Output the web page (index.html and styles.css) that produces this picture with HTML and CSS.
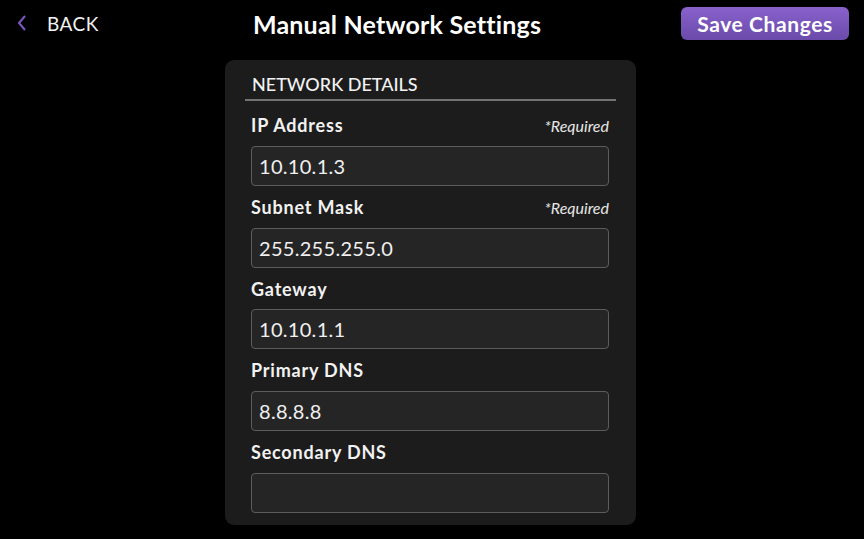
FILE: index.html
```html
<!DOCTYPE html>
<html lang="en">
<head>
    <meta charset="UTF-8">
    <meta name="viewport" content="width=device-width, initial-scale=1.0">
    <title>Manual Network Settings</title>
    <link rel="stylesheet" href="styles.css">
</head>
<body>

<!-- Top bar -->
<div class="topbar">
    <a class="back" href="#">
        <svg class="chev" width="10" height="16" viewBox="0 0 10 16">
            <path d="M8 1 L2 8 L8 15" fill="none" stroke="#7e57c2" stroke-width="2"/>
        </svg>
        <span>BACK</span>
    </a>
    <h1>Manual Network Settings</h1>
    <button class="save">Save Changes</button>
</div>

<div class="card">
    <div class="section-title">NETWORK DETAILS</div>

    <div class="field">
        <div class="label-row"><label>IP Address</label><span class="req">*Required</span></div>
        <input class="input" type="text" value="10.10.1.3">
    </div>
    <div class="field">
        <div class="label-row"><label>Subnet Mask</label><span class="req">*Required</span></div>
        <input class="input" type="text" value="255.255.255.0">
    </div>
    <div class="field">
        <div class="label-row"><label>Gateway</label></div>
        <input class="input" type="text" value="10.10.1.1">
    </div>
    <div class="field">
        <div class="label-row"><label>Primary DNS</label></div>
        <input class="input" type="text" value="8.8.8.8">
    </div>
    <div class="field">
        <div class="label-row"><label>Secondary DNS</label></div>
        <input class="input" type="text" value="">
    </div>
</div>

</body>
</html>
```

FILE: styles.css
```css
body {
    margin: 0;
    background: #000;
    color: #f2f2f2;
    font-family: 'Lato', 'Open Sans', sans-serif;
    overflow: hidden;
}

/* Top bar */
.topbar {
    height: 46px;
    display: flex;
    align-items: center;
    padding: 0 15px 0 17px;
}

.back {
    display: flex;
    align-items: center;
    gap: 20px;
    color: #f2f2f2;
    text-decoration: none;
    font-size: 19px;
    letter-spacing: 0.5px;
}

.chev {
    display: block;
}

h1 {
    margin: 2px 0 0 154px;
    font-size: 25px;
    font-weight: 700;
    letter-spacing: 0.2px;
    color: #fff;
}

.save {
    margin-left: auto;
    width: 168px;
    height: 33px;
    border: none;
    border-radius: 6px;
    background: linear-gradient(180deg, #8962cc, #6a4aaa);
    color: #fff;
    font-family: 'Lato', sans-serif;
    font-size: 21px;
    font-weight: 700;
    letter-spacing: 0.6px;
    cursor: pointer;
}

/* Card */
.card {
    width: 371px;
    margin: 14px 0 0 225px;
    padding: 13px 20px 12px 20px;
    background: #1c1c1c;
    border-radius: 9px;
}

.section-title {
    padding: 0 0 4px 7px;
    font-size: 18px;
    font-weight: 500;
    line-height: 22px;
    border-bottom: 2px solid #737373;
    margin-bottom: 13px;
}

.field {
    padding: 0 7px 0 6px;
    margin-bottom: 10px;
}

.field:last-child {
    margin-bottom: 0;
}

.label-row {
    display: flex;
    justify-content: space-between;
    align-items: baseline;
    height: 22px;
    line-height: 22px;
    margin-bottom: 9.75px;
}

.label-row label {
    font-size: 18px;
    font-weight: 700;
    letter-spacing: 0.8px;
}

.req {
    font-size: 16px;
    font-style: italic;
    color: #e6e6e6;
}

.input {
    display: block;
    box-sizing: border-box;
    width: 100%;
    height: 40px;
    padding: 0 7px;
    background: #252525;
    border: 1px solid #5c5c5c;
    border-radius: 4px;
    color: #f0f0f0;
    font-family: 'Lato', sans-serif;
    font-size: 20px;
    letter-spacing: 0.3px;
    outline: none;
}
```
